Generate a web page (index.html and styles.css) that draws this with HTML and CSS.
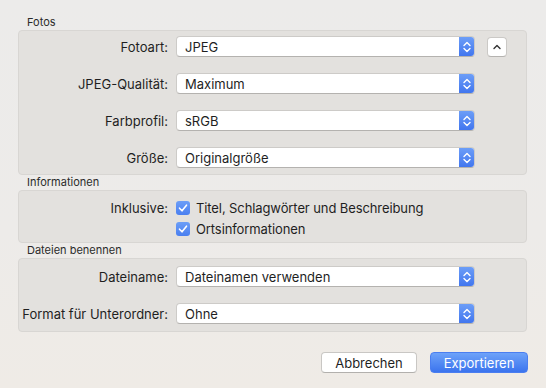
FILE: index.html
```html
<!DOCTYPE html>
<html lang="de">
<head>
    <meta charset="UTF-8">
    <meta name="viewport" content="width=device-width, initial-scale=1.0">
    <title>Exportieren</title>
    <link rel="stylesheet" href="styles.css">
</head>
<body>
    <div class="dialog">
        <div class="section-title">Fotos</div>
        <div class="group group-photos">
            <div class="row">
                <label class="row-label">Fotoart:</label>
                <div class="popup"><span>JPEG</span><span class="stepper"><svg viewBox="0 0 16 20" width="16" height="20"><path d="M5 8.5 L8 5.5 L11 8.5 M5 11.5 L8 14.5 L11 11.5" fill="none" stroke="#fff" stroke-width="1.4" stroke-linecap="round" stroke-linejoin="round"/></svg></span></div>
                <button class="disclosure"><svg viewBox="0 0 20 20" width="20" height="20"><path d="M7 11.5 L10 8.5 L13 11.5" fill="none" stroke="#333" stroke-width="1.4" stroke-linecap="round" stroke-linejoin="round"/></svg></button>
            </div>
            <div class="row">
                <label class="row-label">JPEG-Qualität:</label>
                <div class="popup"><span>Maximum</span><span class="stepper"><svg viewBox="0 0 16 20" width="16" height="20"><path d="M5 8.5 L8 5.5 L11 8.5 M5 11.5 L8 14.5 L11 11.5" fill="none" stroke="#fff" stroke-width="1.4" stroke-linecap="round" stroke-linejoin="round"/></svg></span></div>
            </div>
            <div class="row">
                <label class="row-label">Farbprofil:</label>
                <div class="popup"><span>sRGB</span><span class="stepper"><svg viewBox="0 0 16 20" width="16" height="20"><path d="M5 8.5 L8 5.5 L11 8.5 M5 11.5 L8 14.5 L11 11.5" fill="none" stroke="#fff" stroke-width="1.4" stroke-linecap="round" stroke-linejoin="round"/></svg></span></div>
            </div>
            <div class="row">
                <label class="row-label">Größe:</label>
                <div class="popup"><span>Originalgröße</span><span class="stepper"><svg viewBox="0 0 16 20" width="16" height="20"><path d="M5 8.5 L8 5.5 L11 8.5 M5 11.5 L8 14.5 L11 11.5" fill="none" stroke="#fff" stroke-width="1.4" stroke-linecap="round" stroke-linejoin="round"/></svg></span></div>
            </div>
        </div>

        <div class="section-title">Informationen</div>
        <div class="group group-info">
            <div class="check-row">
                <label class="row-label">Inklusive:</label>
                <div class="check"><span class="box"><svg viewBox="0 0 14 14" width="14" height="14"><path d="M3.5 7.2 L6 9.8 L10.5 4.2" fill="none" stroke="#fff" stroke-width="1.6" stroke-linecap="round" stroke-linejoin="round"/></svg></span>Titel, Schlagwörter und Beschreibung</div>
            </div>
            <div class="check-row">
                <span class="row-label"></span>
                <div class="check"><span class="box"><svg viewBox="0 0 14 14" width="14" height="14"><path d="M3.5 7.2 L6 9.8 L10.5 4.2" fill="none" stroke="#fff" stroke-width="1.6" stroke-linecap="round" stroke-linejoin="round"/></svg></span>Ortsinformationen</div>
            </div>
        </div>

        <div class="section-title">Dateien benennen</div>
        <div class="group group-names">
            <div class="row">
                <label class="row-label">Dateiname:</label>
                <div class="popup"><span>Dateinamen verwenden</span><span class="stepper"><svg viewBox="0 0 16 20" width="16" height="20"><path d="M5 8.5 L8 5.5 L11 8.5 M5 11.5 L8 14.5 L11 11.5" fill="none" stroke="#fff" stroke-width="1.4" stroke-linecap="round" stroke-linejoin="round"/></svg></span></div>
            </div>
            <div class="row">
                <label class="row-label">Format für Unterordner:</label>
                <div class="popup"><span>Ohne</span><span class="stepper"><svg viewBox="0 0 16 20" width="16" height="20"><path d="M5 8.5 L8 5.5 L11 8.5 M5 11.5 L8 14.5 L11 11.5" fill="none" stroke="#fff" stroke-width="1.4" stroke-linecap="round" stroke-linejoin="round"/></svg></span></div>
            </div>
        </div>

        <div class="actions">
            <button class="btn">Abbrechen</button>
            <button class="btn btn-primary">Exportieren</button>
        </div>
    </div>
</body>
</html>
```

FILE: styles.css
```css
html, body {
    margin: 0;
    height: 100%;
}
body {
    font-family: Inter, "Noto Sans", sans-serif;
    font-size: 13px;
    color: #1f1f1f;
    background: linear-gradient(180deg, #ecebea 0%, #edebe9 60%, #efebe6 100%);
}
.dialog {
    padding: 15px 19px 0 18px;
}
.section-title {
    font-size: 11px;
    height: 15px;
    line-height: 15px;
    padding-left: 9px;
    color: #2b2b2b;
}
.group {
    background-color: #e3e1de;
    border: 1px solid #d8d6d3;
    border-radius: 4px;
}
.group-photos {
    padding: 5px 0 6px;
    display: flex;
    flex-direction: column;
    gap: 16px;
}
.group-info {
    padding: 6px 0 3px;
}
.group-names {
    padding: 7px 0 7px;
    display: flex;
    flex-direction: column;
    gap: 16px;
}
.row, .check-row {
    display: grid;
    grid-template-columns: 149px 299px 32px;
    column-gap: 8px;
    align-items: center;
    height: 21px;
}
.row-label {
    text-align: right;
}
.popup {
    height: 21px;
    box-sizing: border-box;
    background-color: #fff;
    border: 1px solid #cdcbc8;
    border-bottom-color: #b4b2af;
    border-radius: 4px;
    display: flex;
    align-items: center;
    justify-content: space-between;
    padding-left: 8px;
    overflow: hidden;
}
.stepper {
    width: 16px;
    height: 21px;
    margin-right: -1px;
    background: linear-gradient(180deg, #6fa0f8 0%, #3f74ee 100%);
    display: flex;
    align-items: center;
    justify-content: center;
}
.stepper svg {
    display: block;
}
.disclosure {
    width: 20px;
    height: 20px;
    margin-left: 4px;
    padding: 0;
    background-color: #fff;
    border: 1px solid #cbc9c6;
    border-bottom-color: #b5b3b0;
    border-radius: 4px;
}
.disclosure svg {
    display: block;
    margin: -1px;
}
.check {
    display: flex;
    align-items: center;
    gap: 6px;
    white-space: nowrap;
    letter-spacing: -0.1px;
}
.box {
    width: 14px;
    height: 14px;
    border-radius: 3px;
    background: linear-gradient(180deg, #6c9ef7 0%, #4a7ff0 100%);
    display: inline-block;
}
.box svg {
    display: block;
}
.actions {
    display: flex;
    justify-content: flex-end;
    gap: 13px;
    margin-top: 20px;
    margin-right: -1px;
}
.btn {
    font-family: Inter, "Noto Sans", sans-serif;
    font-size: 13px;
    height: 21px;
    width: 96px;
    padding: 0;
    color: #1f1f1f;
    background-color: #fff;
    border: 1px solid #c9c7c4;
    border-bottom-color: #b2b0ad;
    border-radius: 4px;
}
.btn-primary {
    width: 98px;
    color: #fff;
    border-color: #4a7ef0;
    background: linear-gradient(180deg, #6da2f9 0%, #3b74ee 100%);
}
```
